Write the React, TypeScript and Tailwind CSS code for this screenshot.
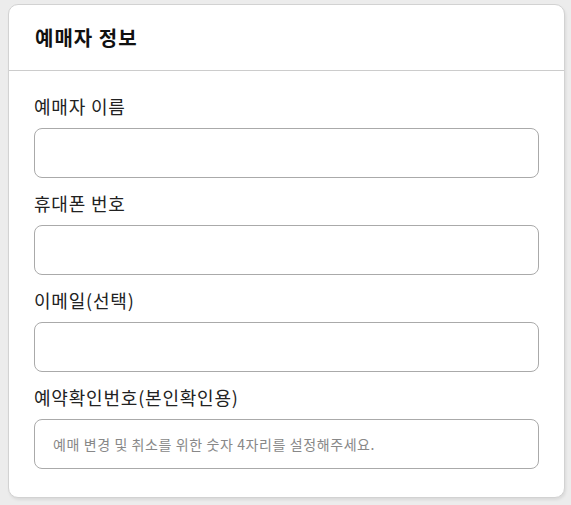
import React from "react";

const font = { fontFamily: '"Noto Sans CJK KR", "Noto Sans", sans-serif' };

function Field({ label, placeholder }: { label: string; placeholder?: string }) {
  return (
    <div className="flex flex-col">
      <label className="text-[18px] leading-[27px] tracking-[0.8px] text-[#222] mb-[8px]">{label}</label>
      <input
        type="text"
        placeholder={placeholder}
        className="h-[50px] w-full rounded-[8px] border border-[#aaaaaa] bg-white px-[18px] text-[14px] tracking-[0.6px] text-[#333] placeholder:text-[#888] outline-none"
        style={font}
      />
    </div>
  );
}

export default function App() {
  return (
    <div className="min-h-[505px] w-[571px] bg-[#ececec] pt-[4px] pl-[8px]" style={font}>
      <div className="w-[557px] rounded-[10px] border border-[#d2d2d2] bg-white shadow-[1px_2px_3px_rgba(0,0,0,0.08)]">
        <div className="flex h-[66px] items-center border-b border-[#cccccc] px-[26px]">
          <h2 className="text-[20px] font-bold tracking-[1px] text-[#111]">예매자 정보</h2>
        </div>
        <div className="flex flex-col gap-[12px] px-[25px] pt-[22px] pb-[28px]">
          <Field label="예매자 이름" />
          <Field label="휴대폰 번호" />
          <Field label="이메일(선택)" />
          <Field label="예약확인번호(본인확인용)" placeholder="예매 변경 및 취소를 위한 숫자 4자리를 설정해주세요." />
        </div>
      </div>
    </div>
  );
}
